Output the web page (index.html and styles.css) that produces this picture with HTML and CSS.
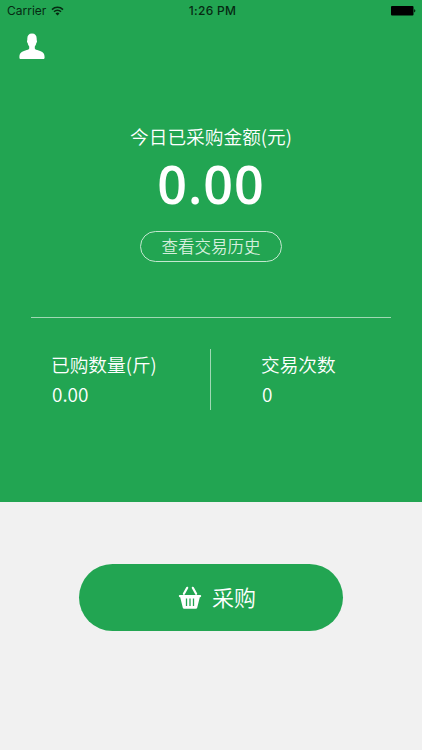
FILE: index.html
```
<!DOCTYPE html>
<html lang="zh-CN">
    <head>
        <meta charset="utf-8">
        <meta name="viewport" content="width=device-width, initial-scale=1">
        <title>采购</title>
        <link rel="stylesheet" href="styles.css">
    </head>
    <body>
        <div class="top">
            <div class="status">
                <div class="carrier">
                    <span>Carrier</span>
                    <svg class="wifi" width="13" height="10" viewBox="0 0 13 10">
                        <path d="M1 3.600a7.800 7.800 0 0 1 11 0M3 5.800a5 5 0 0 1 7 0" fill="none" stroke="#062a12" stroke-width="1.5"/>
                        <path d="M4.500 7.400a2.900 2.900 0 0 1 4 0l-2 2.100z" fill="#062a12"/>
                    </svg>
                </div>
                <div class="time">1:26 PM</div>
                <svg class="battery" width="26" height="10" viewBox="0 0 26 10">
                    <rect x="1" y="0" width="22.5" height="9.6" rx="1" fill="#000"/>
                    <path d="M24 3.2q1.4.4 1.4 1.6t-1.4 1.6z" fill="#062a12"/>
                </svg>
            </div>
            <a class="user" href="#">
                <svg width="26" height="27" viewBox="0 0 26 27">
                    <path d="M13 0.500c3.200 0 4.700 2 4.700 5.200v1.500c.6.500.3 2.300-.4 2.800-.3 1.700-.8 2.600-1.500 3.400v2.200c.4 1 1.800 1.400 3.900 2 3.800 1.100 5.900 2.600 5.900 6.600 0 1.200-.3 1.800-1.200 1.800H1.600c-.9 0-1.200-.6-1.200-1.800 0-4 2.100-5.500 5.900-6.600 2.100-.6 3.500-1 3.900-2v-2.200c-.7-.8-1.200-1.700-1.500-3.400-.7-.5-1-2.300-.4-2.800V5.700c0-3.200 1.500-5.200 4.700-5.200z" fill="#fff"/>
                </svg>
            </a>
            <div class="amount">
                <div class="amount-title">今日已采购金额(元)</div>
                <div class="amount-num">0.00</div>
                <a class="history" href="#">查看交易历史</a>
            </div>
            <div class="stats">
                <div class="stat">
                    <div>已购数量(斤)</div>
                    <div class="num">0.00</div>
                </div>
                <div class="stat">
                    <div>交易次数</div>
                    <div class="num">0</div>
                </div>
            </div>
        </div>
        <button class="buy">
            <svg width="24" height="24" viewBox="0 0 24 24">
                <path d="M9.200 1.800L5.900 7.800M14.800 1.800L18.100 7.800" stroke="#fff" stroke-width="2.200" stroke-linecap="round"/>
                <path d="M1.800 9h20.400q1 0 1 1t-1 1.200h-.4l-2.600 10.600q-.3 1-1.300 1H6.100q-1 0-1.300-1L2.200 11.200h-.4q-1-.2-1-1.200t1-1z" fill="#fff"/>
                <path d="M8.500 12.500v7.500M12 12.500v7.500M15.500 12.500v7.500" stroke="#22a552" stroke-width="1.300"/>
            </svg>
            <span>采购</span>
        </button>
    </body>
</html>
```
FILE: styles.css
```
* {box-sizing: border-box;}
body {margin: 0; height: 750px; background-color: #f1f1f1; color: #fff; font-family: "Noto Sans CJK SC", sans-serif; font-weight: 350;}
a {color: inherit; text-decoration: none;}
svg {display: block;}

.top {height: 502px; background-color: #22a552; overflow: hidden;}

.status {
    height: 22px;
    padding: 0 6px 0 7px;
    display: grid;
    grid-template-columns: 1fr auto 1fr;
    align-items: center;
    color: #062a12;
    font-family: Inter, sans-serif;
    font-size: 12px;
    line-height: 20px;
    font-weight: 400;
}
.carrier {display: flex; align-items: center; gap: 5px;}
.time {font-weight: 500; letter-spacing: 0.3px; padding-left: 2px;}
.battery {justify-self: end;}

.user {display: block; width: 26px; margin: 11px 0 0 19px;}

.amount {display: flex; flex-direction: column; align-items: center; padding-top: 62px;}
.amount-title {font-size: 18.700px; line-height: 28px;}
.amount-num {font-family: "Open Sans", sans-serif; font-size: 52px; font-weight: 650; line-height: 60px; margin-top: 4px; letter-spacing: 1px;}
.history {
    width: 142px;
    height: 31px;
    margin-top: 17px;
    border: 1px solid #c4e8d0;
    border-radius: 16px;
    font-size: 16.500px;
    line-height: 28px;
    text-align: center;
    color: #d5efdd;
}

.stats {display: flex; margin: 55px 31px 0; padding-top: 31px; border-top: 1px solid #a0d8b4;}
.stat {width: 179px; height: 61px; padding-left: 20px; font-size: 18.700px; line-height: 30px;}
.stat + .stat {border-left: 1px solid #a0d8b4; padding-left: 50px;}
.num {font-size: 19px; padding-left: 1px;}

.buy {
    display: flex;
    align-items: center;
    justify-content: center;
    gap: 10px;
    width: 264px;
    height: 67px;
    margin: 62px auto 0;
    padding: 0 0 0 12px;
    border: none;
    border-radius: 34px;
    background-color: #22a552;
    color: #fff;
    font-family: inherit;
    font-size: 22px;
    font-weight: 350;
}
.buy span {line-height: 30px; margin-top: -3px;}
```
